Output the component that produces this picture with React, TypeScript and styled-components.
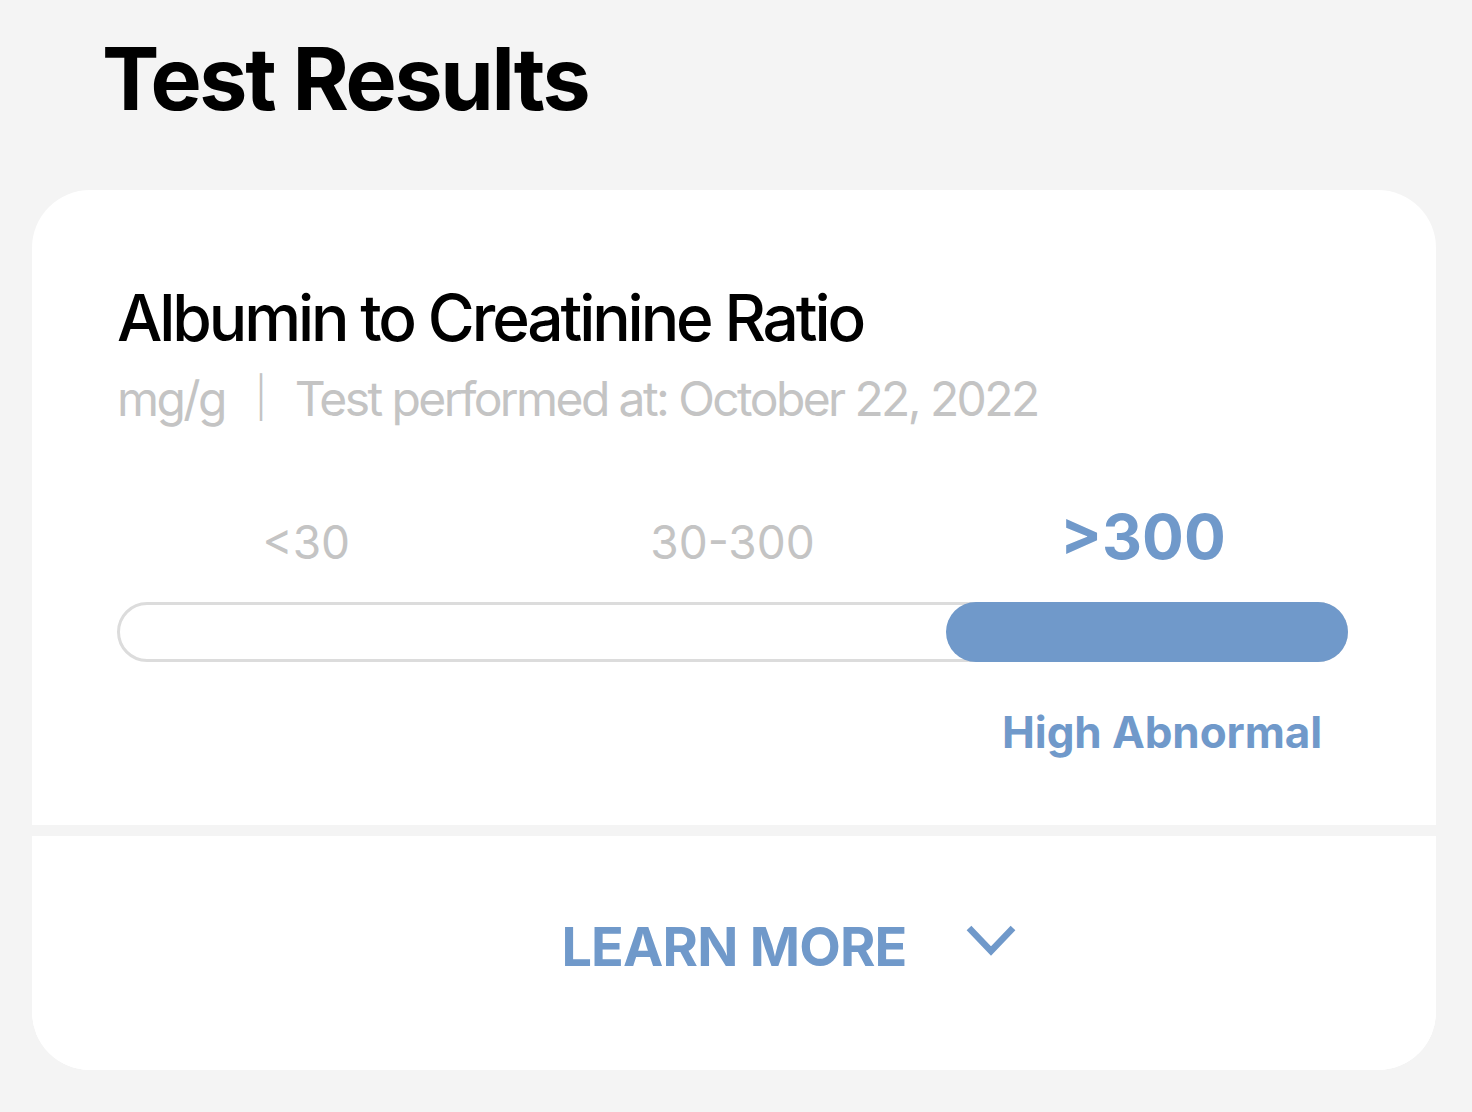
import styled, { createGlobalStyle } from 'styled-components';

const GlobalStyle = createGlobalStyle`
  body {
    margin: 0;
    background: #f4f4f4;
    font-family: Inter, "Noto Sans", sans-serif;
  }
`;

const BLUE = '#7099ca';
const GREY = '#c4c4c4';

const Page = styled.main`
  padding: 36px 36px 42px 32px;
`;

const PageTitle = styled.h1`
  margin: 0 0 68px 70px;
  font-size: 86px;
  line-height: 1;
  font-weight: 700;
  letter-spacing: -2.3px;
  color: #000;
`;

const Card = styled.section`
  background: #fff;
  border-radius: 58px;
  overflow: hidden;
`;

const CardBody = styled.div`
  padding: 96px 88px 71px 85px;
`;

const CardTitle = styled.h2`
  margin: 0;
  font-size: 64px;
  line-height: 1;
  font-weight: 500;
  letter-spacing: -3.1px;
  color: #000;
`;

const Meta = styled.div`
  display: flex;
  align-items: baseline;
  gap: 30px;
  margin-top: 25px;
  font-size: 48px;
  line-height: 1;
  letter-spacing: -2.6px;
  color: ${GREY};
`;

const Separator = styled.span`
  font-size: 40px;
  font-weight: 300;
  position: relative;
  top: -4px;
`;

const Ranges = styled.div`
  display: grid;
  grid-template-columns: repeat(3, 1fr);
  align-items: baseline;
  margin-top: 83px;
`;

const RangeLabel = styled.span<{ $active?: boolean; $nudge?: number }>`
  text-align: center;
  line-height: 1;
  padding-right: ${(p) => p.$nudge ?? 0}px;
  font-size: ${(p) => (p.$active ? '62px' : '46px')};
  font-weight: ${(p) => (p.$active ? 700 : 400)};
  color: ${(p) => (p.$active ? BLUE : GREY)};
`;

const Track = styled.div`
  margin-top: 34px;
  height: 60px;
  box-sizing: border-box;
  border: 3px solid #dcdcdc;
  border-radius: 30px;
  display: flex;
  justify-content: flex-end;
`;

const Fill = styled.div`
  margin: -3px;
  background: ${BLUE};
  border-radius: 30px;
`;

const Status = styled.div`
  margin-top: 48px;
  padding-right: 26px;
  text-align: right;
  font-size: 44px;
  line-height: 1;
  font-weight: 700;
  letter-spacing: -0.1px;
  color: ${BLUE};
`;

const Divider = styled.hr`
  margin: 0;
  border: none;
  height: 11px;
  background: #f4f4f4;
`;

const LearnMore = styled.button`
  width: 100%;
  height: 234px;
  border: none;
  background: #fff;
  display: grid;
  grid-template-columns: 1fr auto 1fr;
  align-items: center;
  padding: 0 0 12px;
  font-family: inherit;
  font-size: 54px;
  font-weight: 700;
  color: ${BLUE};
  cursor: pointer;
`;

const LearnText = styled.span`
  grid-column: 2;
  line-height: 1;
  letter-spacing: -0.8px;
`;

const Chevron = styled.svg`
  justify-self: start;
  margin-left: 58px;
  margin-top: -14px;
`;

const ranges = ['<30', '30-300', '>300'];
const activeIndex = 2;
// share of the track taken by the highlighted band
const fillWidth = 32.8;

export default function App() {
  return (
    <>
      <GlobalStyle />
      <Page>
        <PageTitle>Test Results</PageTitle>
        <Card>
          <CardBody>
            <CardTitle>Albumin to Creatinine Ratio</CardTitle>
            <Meta>
              <span>mg/g</span>
              <Separator>|</Separator>
              <span>Test performed at: October 22, 2022</span>
            </Meta>
            <Ranges>
              {ranges.map((r, i) => (
                <RangeLabel key={r} $active={i === activeIndex} $nudge={i === 0 ? 32 : 0}>
                  {r}
                </RangeLabel>
              ))}
            </Ranges>
            <Track>
              <Fill style={{ width: `${fillWidth}%` }} />
            </Track>
            <Status>High Abnormal</Status>
          </CardBody>
          <Divider />
          <LearnMore>
            <LearnText>LEARN MORE</LearnText>
            <Chevron width="52" height="34" viewBox="0 0 52 34">
              <path d="M4 5 L26 28 L48 5" fill="none" stroke={BLUE} strokeWidth="6.5" />
            </Chevron>
          </LearnMore>
        </Card>
      </Page>
    </>
  );
}
